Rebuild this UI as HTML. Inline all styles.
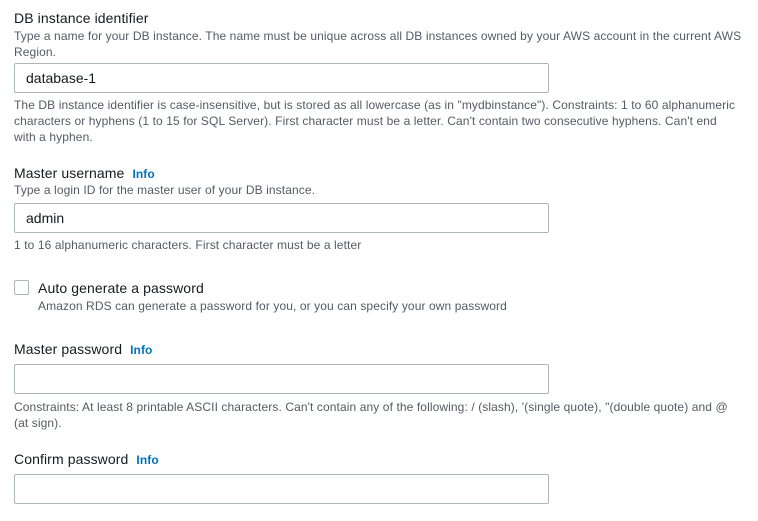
<!DOCTYPE html>
<html><head><style>
body{margin:0;width:758px;height:521px;background:#fff;font-family:"Liberation Sans",Arial,sans-serif;position:relative;overflow:hidden;color:#16191f}
.a{position:absolute;white-space:nowrap}
.l{font-size:14px;color:#16191f;letter-spacing:0.1px}
.h{font-size:12px;color:#545b64;letter-spacing:0.1px;line-height:16px}
.i{font-size:12px;color:#0073bb;font-weight:bold;margin-left:8px}
.in{position:absolute;left:14px;width:533px;height:28px;border:1px solid #aab7b8;border-radius:2px;font-size:14px;line-height:28px;text-indent:11px;box-sizing:content-box}
</style></head><body>
<div class="a l" style="left:14px;top:10px">DB instance identifier</div>
<div class="a h" style="left:14px;top:28px">Type a name for your DB instance. The name must be unique across all DB instances owned by your AWS account in the current AWS<br>Region.</div>
<div class="in" style="top:63px">database-1</div>
<div class="a h" style="left:14px;top:97px">The DB instance identifier is case-insensitive, but is stored as all lowercase (as in "mydbinstance"). Constraints: 1 to 60 alphanumeric<br>characters or hyphens (1 to 15 for SQL Server). First character must be a letter. Can't contain two consecutive hyphens. Can't end<br>with a hyphen.</div>
<div class="a l" style="left:14px;top:165px">Master username<span class="i">Info</span></div>
<div class="a h" style="left:14px;top:182px">Type a login ID for the master user of your DB instance.</div>
<div class="in" style="top:203px">admin</div>
<div class="a h" style="left:14px;top:237px">1 to 16 alphanumeric characters. First character must be a letter</div>
<div class="a" style="left:14px;top:280px;width:13px;height:13px;border:1px solid #aab7b8;border-radius:2px"></div>
<div class="a l" style="left:38px;top:280px">Auto generate a password</div>
<div class="a h" style="left:38px;top:298px">Amazon RDS can generate a password for you, or you can specify your own password</div>
<div class="a l" style="left:14px;top:341px">Master password<span class="i">Info</span></div>
<div class="in" style="top:364px"></div>
<div class="a h" style="left:14px;top:399px">Constraints: At least 8 printable ASCII characters. Can't contain any of the following: / (slash), '(single quote), "(double quote) and @<br>(at sign).</div>
<div class="a l" style="left:14px;top:451px">Confirm password<span class="i">Info</span></div>
<div class="in" style="top:474px"></div>
</body></html>
